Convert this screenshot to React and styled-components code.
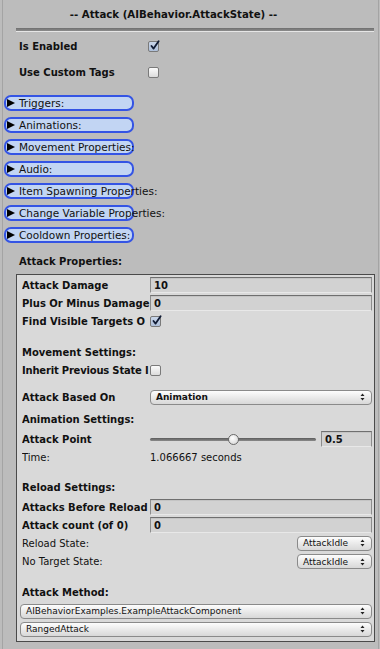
import React from "react";
import styled, { createGlobalStyle } from "styled-components";

const Global = createGlobalStyle`
  html, body { margin: 0; padding: 0; background: #bcbcbc; }
  body { font-family: "DejaVu Sans", "Liberation Sans", sans-serif; color: #111; }
`;

const Page = styled.div`
  height: 649px;
  overflow: hidden;
  box-sizing: border-box;
  border-left: 1px solid #a4a4a4;
  border-right: 1px solid #a4a4a4;
  margin-left: 2px;
  width: 377px;
  background: #bcbcbc;
  display: flex;
  flex-direction: column;
`;

const Title = styled.div`
  height: 28px;
  display: flex;
  align-items: center;
  justify-content: center;
  font-weight: bold;
  font-size: 10.2px;
  padding-right: 34px;
`;

const Separator = styled.div`
  margin-left: 13px;
  width: 358px;
  height: 3px;
  background: linear-gradient(#6f6f6f, #8c8c8c);
  border-bottom: 1px solid #e6e6e6;
`;

const Spacer = styled.div`
  height: ${(p) => p.h}px;
  flex: none;
`;

const TopRow = styled.div`
  height: 18px;
  display: flex;
  align-items: center;
  padding-left: 16px;
`;

const TopLabel = styled.div`
  width: 129px;
  font-weight: bold;
  font-size: 10px;
  white-space: nowrap;
`;

const Check = styled.div`
  width: 11px;
  height: 11px;
  box-sizing: border-box;
  border: 1px solid #7a7a7a;
  border-radius: 2px;
  background: ${(p) =>
    p.checked
      ? "linear-gradient(#c9d6ea, #aebfd9)"
      : "linear-gradient(#fbfbfb, #dcdcdc)"};
  position: relative;
  flex: none;
`;

const Foldouts = styled.div`
  display: flex;
  flex-direction: column;
  gap: 6px;
`;

const Foldout = styled.div`
  position: relative;
  margin-left: 1px;
  width: 130px;
  height: 16px;
  box-sizing: border-box;
  border: 2px solid #3454e4;
  border-radius: 7px;
  background: #c2d5f3;
  display: flex;
  align-items: center;
`;

const FoldText = styled.span`
  position: absolute;
  left: 13px;
  top: 0px;
  line-height: 12px;
  font-size: 10.5px;
  white-space: nowrap;
  color: #111;
`;

const Triangle = styled.span`
  width: 0;
  height: 0;
  margin-left: 1px;
  border-top: 4.5px solid transparent;
  border-bottom: 4.5px solid transparent;
  border-left: 8px solid #000;
`;

const Header = styled.div`
  height: 18px;
  display: flex;
  align-items: center;
  padding-left: ${(p) => p.pad ?? 0}px;
  font-weight: bold;
  font-size: 10px;
  white-space: nowrap;
`;

const Box = styled.div`
  margin-left: 13px;
  width: 359px;
  box-sizing: border-box;
  border: 1px solid #4a4a4a;
  background: #d9d9d9;
  padding: 1px 2px 4px 5px;
  display: flex;
  flex-direction: column;
`;

const Row = styled.div`
  height: ${(p) => p.h ?? 18}px;
  display: flex;
  align-items: center;
  flex: none;
`;

const Label = styled.div`
  width: 128px;
  flex: none;
  overflow: hidden;
  white-space: nowrap;
  font-size: 10px;
  letter-spacing: ${(p) => (p.tight ? "-0.2px" : "normal")};
  font-weight: ${(p) => (p.regular ? "normal" : "bold")};
  color: #111;
`;

const Field = styled.div`
  flex: ${(p) => (p.w ? "none" : "1")};
  width: ${(p) => (p.w ? `${p.w}px` : "auto")};
  height: 16px;
  box-sizing: border-box;
  border: 1px solid #8c8c8c;
  border-top-color: #6f6f6f;
  border-bottom-color: #e8e8e8;
  background: #d2d2d2;
  box-shadow: inset 0 1px 0 #c4c4c4;
  font-size: 10px;
  font-weight: bold;
  padding-left: 3px;
  display: flex;
  align-items: center;
`;

const Popup = styled.div`
  flex: ${(p) => (p.w ? "none" : "1")};
  width: ${(p) => (p.w ? `${p.w}px` : "auto")};
  margin-left: ${(p) => (p.auto ? "auto" : p.shift ? `${p.shift}px` : "0")};
  height: 15px;
  box-sizing: border-box;
  border: 1px solid #8a8a8a;
  border-radius: 4px;
  background: linear-gradient(#fdfdfd, #e6e6e6 60%, #d8d8d8);
  font-size: 9px;
  font-weight: ${(p) => (p.bold ? "bold" : "normal")};
  padding: 0 6px 0 5px;
  display: flex;
  align-items: center;
  justify-content: space-between;
  color: #111;
`;

const Plain = styled.div`
  font-size: 10px;
  white-space: nowrap;
`;

const SliderWrap = styled.div`
  flex: 1;
  display: flex;
  align-items: center;
  gap: 5px;
`;

const Track = styled.div`
  position: relative;
  flex: 1;
  height: 3px;
  border-radius: 2px;
  background: linear-gradient(#5c5c5c, #8a8a8a);
`;

const Thumb = styled.div`
  position: absolute;
  left: 50%;
  top: 50%;
  width: 11px;
  height: 11px;
  margin-left: -5.5px;
  margin-top: -5.5px;
  box-sizing: border-box;
  border-radius: 50%;
  border: 1px solid #6a6a6a;
  background: radial-gradient(circle at 40% 35%, #ffffff, #d0d0d0);
`;

const MarkSvg = styled.svg`
  position: absolute;
  left: 0;
  top: -2px;
`;

const Arrows = () => (
  <svg width="5" height="8" viewBox="0 0 5 8">
    <path d="M2.5 0.5 L4.5 3 L0.5 3 Z M2.5 7.5 L4.5 5 L0.5 5 Z" fill="#222" />
  </svg>
);

const CheckMark = () => (
  <MarkSvg width="11" height="11" viewBox="0 0 11 11">
    <path
      d="M2.5 6 L4.6 8.6 L9.6 1.2"
      fill="none"
      stroke="#0f1a33"
      strokeWidth="1.8"
      strokeLinecap="round"
      strokeLinejoin="round"
    />
  </MarkSvg>
);

const Checkbox = ({ checked }) => (
  <Check checked={checked}>{checked && <CheckMark />}</Check>
);

const foldouts = [
  "Triggers:",
  "Animations:",
  "Movement Properties:",
  "Audio:",
  "Item Spawning Properties:",
  "Change Variable Properties:",
  "Cooldown Properties:",
];

export default function App() {
  return (
    <>
      <Global />
      <Page>
        <Title>-- Attack (AIBehavior.AttackState) --</Title>
        <Separator />
        <Spacer h={5} />
        <TopRow>
          <TopLabel>Is Enabled</TopLabel>
          <Checkbox checked />
        </TopRow>
        <Spacer h={8} />
        <TopRow>
          <TopLabel>Use Custom Tags</TopLabel>
          <Checkbox />
        </TopRow>
        <Spacer h={14} />
        <Foldouts>
          {foldouts.map((f) => (
            <Foldout key={f}>
              <Triangle />
              <FoldText>{f}</FoldText>
            </Foldout>
          ))}
        </Foldouts>
        <Spacer h={9} />
        <Header pad={16}>Attack Properties:</Header>
        <Spacer h={4} />
        <Box>
          <Row>
            <Label>Attack Damage</Label>
            <Field>10</Field>
          </Row>
          <Row>
            <Label>Plus Or Minus Damage</Label>
            <Field>0</Field>
          </Row>
          <Row>
            <Label>Find Visible Targets O</Label>
            <Checkbox checked />
          </Row>
          <Spacer h={13} />
          <Row>
            <Label>Movement Settings:</Label>
          </Row>
          <Row>
            <Label tight>Inherit Previous State I</Label>
            <Checkbox />
          </Row>
          <Spacer h={9} />
          <Row>
            <Label>Attack Based On</Label>
            <Popup bold>
              <span>Animation</span>
              <Arrows />
            </Popup>
          </Row>
          <Spacer h={4} />
          <Row>
            <Label>Animation Settings:</Label>
          </Row>
          <Spacer h={2} />
          <Row>
            <Label>Attack Point</Label>
            <SliderWrap>
              <Track>
                <Thumb />
              </Track>
              <Field w={51}>0.5</Field>
            </SliderWrap>
          </Row>
          <Row>
            <Label regular>Time:</Label>
            <Plain>1.066667 seconds</Plain>
          </Row>
          <Spacer h={12} />
          <Row>
            <Label>Reload Settings:</Label>
          </Row>
          <Spacer h={2} />
          <Row>
            <Label>Attacks Before Reload</Label>
            <Field>0</Field>
          </Row>
          <Row>
            <Label>Attack count (of 0)</Label>
            <Field>0</Field>
          </Row>
          <Row h={18}>
            <Label regular>Reload State:</Label>
            <Popup w={75} auto>
              <span>AttackIdle</span>
              <Arrows />
            </Popup>
          </Row>
          <Row h={19}>
            <Label regular>No Target State:</Label>
            <Popup w={75} auto>
              <span>AttackIdle</span>
              <Arrows />
            </Popup>
          </Row>
          <Spacer h={12} />
          <Row>
            <Label>Attack Method:</Label>
          </Row>
          <Spacer h={2} />
          <Row h={16}>
            <Popup shift={-2}>
              <span>AIBehaviorExamples.ExampleAttackComponent</span>
              <Arrows />
            </Popup>
          </Row>
          <Spacer h={2} />
          <Row h={16}>
            <Popup shift={-2}>
              <span>RangedAttack</span>
              <Arrows />
            </Popup>
          </Row>
        </Box>
      </Page>
    </>
  );
}
